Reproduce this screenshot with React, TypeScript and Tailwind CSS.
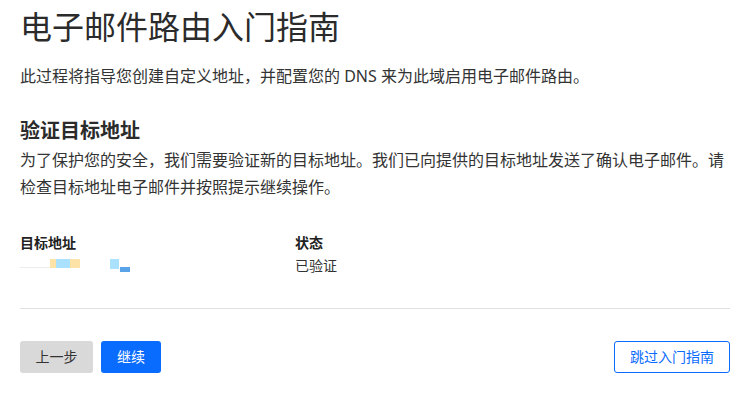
export default function App() {
  return (
    <div
      className="min-h-screen w-full bg-white pl-5 pr-[26px] text-[#333]"
      style={{ fontFamily: '"Noto Sans", "Noto Sans CJK SC", sans-serif' }}
    >
      {/* Title */}
      <h1 className="pt-[6px] text-[32px] leading-[42px] font-normal text-[#2b2b2b]">
        电子邮件路由入门指南
      </h1>
      <p className="mt-[16px] text-base leading-6 text-[#333]">
        此过程将指导您创建自定义地址，并配置您的 DNS 来为此域启用电子邮件路由。
      </p>

      {/* Verify section */}
      <h2 className="mt-[29px] text-xl leading-7 font-bold text-[#2b2b2b]">验证目标地址</h2>
      <p className="mt-[2px] text-base leading-[27px] text-[#333]">
        为了保护您的安全，我们需要验证新的目标地址。我们已向提供的目标地址发送了确认电子邮件。请检查目标地址电子邮件并按照提示继续操作。
      </p>

      {/* Table */}
      <div className="mt-[30px] grid grid-cols-[275px_1fr] text-sm leading-[23px]">
        <div className="font-bold text-[#222]">目标地址</div>
        <div className="font-bold text-[#222]">状态</div>
        <div className="relative h-[23px]">
          <div className="absolute left-0 top-[13px] h-[1px] w-[35px] bg-[#ececec]" />
          <div className="absolute left-[30px] top-[5px] h-[9px] w-[6px] bg-[#fde3a7]" />
          <div className="absolute left-[36px] top-[5px] h-[9px] w-[14px] bg-[#a9e1ff]" />
          <div className="absolute left-[50px] top-[5px] h-[9px] w-[10px] bg-[#fde3a7]" />
          <div className="absolute left-[90px] top-[5px] h-[10px] w-[9px] bg-[#a9e1ff]" />
          <div className="absolute left-[100px] top-[13px] h-[5px] w-[10px] bg-[#5ba3e8]" />
        </div>
        <div className="text-[#333]">已验证</div>
      </div>

      <div className="mt-[31px] border-t border-[#e0e0e0]" />

      {/* Buttons */}
      <div className="mt-[32px] flex items-center text-sm">
        <button className="h-8 w-[73px] rounded-[3px] bg-[#d9d9d9] text-[#333]">上一步</button>
        <button className="ml-2 h-8 w-[60px] rounded-[3px] bg-[#0a6cff] text-white">继续</button>
        <button className="ml-auto h-8 w-[116px] rounded-[3px] border border-[#0a6cff] bg-white text-[#0a6cff]">
          跳过入门指南
        </button>
      </div>
    </div>
  );
}
